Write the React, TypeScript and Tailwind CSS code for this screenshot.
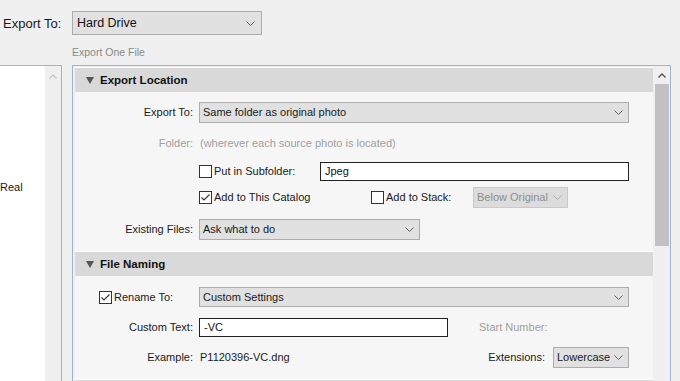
import React from "react";

function Chevron({ color = "#606060" }: { color?: string }) {
  return (
    <svg width="9" height="5" viewBox="0 0 9 5" className="shrink-0">
      <path d="M0.5 0.5 L4.5 4.5 L8.5 0.5" stroke={color} strokeWidth="1" fill="none" />
    </svg>
  );
}

function Dropdown({
  value,
  className = "",
  disabled = false
}: {
  value: string;
  className?: string;
  disabled?: boolean;
}) {
  return (
    <div
      className={`flex items-center justify-between border pl-[3px] pr-[5px] ${
        disabled
          ? "border-[#c9c9c9] bg-[#dcdcdc] text-[#8e8e8e]"
          : "border-[#adadad] bg-[#e1e1e1] text-[#1a1a1a]"
      } ${className}`}
    >
      <span className="whitespace-nowrap">{value}</span>
      <Chevron color={disabled ? "#b0b0b0" : "#606060"} />
    </div>
  );
}

function Checkbox({ checked = false }: { checked?: boolean }) {
  return (
    <span className="flex h-[13px] w-[13px] shrink-0 items-center justify-center border border-[#333] bg-white">
      {checked && (
        <svg width="11" height="11" viewBox="0 0 11 11">
          <path d="M1.5 5.5 L4 8 L9.5 2.5" stroke="#333" strokeWidth="1.1" fill="none" />
        </svg>
      )}
    </span>
  );
}

function CheckLabel({ label, checked = false, className = "" }: { label: string; checked?: boolean; className?: string }) {
  return (
    <div className={`flex items-center gap-[2px] ${className}`}>
      <Checkbox checked={checked} />
      <span className="whitespace-nowrap text-[#1a1a1a]">{label}</span>
    </div>
  );
}

function Label({ children, muted = false }: { children: React.ReactNode; muted?: boolean }) {
  return (
    <span className={`w-[118px] shrink-0 text-right ${muted ? "text-[#a0a0a0]" : "text-[#1a1a1a]"}`}>
      {children}
    </span>
  );
}

function SectionHeader({ title }: { title: string }) {
  return (
    <div className="flex h-[25px] items-center border-t border-white bg-[#d9d9d9] pl-[11px]">
      <svg width="8" height="7" viewBox="0 0 8 7" className="mr-[6px]">
        <polygon points="0,0 8,0 4,7" fill="#555" />
      </svg>
      <span className="text-[11.5px] font-bold text-[#111]">{title}</span>
    </div>
  );
}

export default function App() {
  return (
    <div className="h-[381px] w-[680px] overflow-hidden bg-[#f0f0f0] font-['Liberation_Sans',Arial,sans-serif] text-[11px] leading-[13px]">
      <div className="flex items-center pt-[11px]">
        <span className="w-[72px] pl-[3px] text-[13px] text-[#1a1a1a]">Export To:</span>
        <div className="flex h-[24px] w-[190px] items-center justify-between border border-[#adadad] bg-[#e1e1e1] pl-[4px] pr-[6px] text-[12.5px] text-[#111]">
          <span>Hard Drive</span>
          <Chevron />
        </div>
      </div>

      <div className="ml-[72px] mt-[11px] text-[10.5px] text-[#8a8a8a]">Export One File</div>

      <div className="mt-[6px] flex">
        <div className="flex h-[320px] w-[62px] border-r border-t border-[#9db4cb] bg-white">
          <div className="w-[45px] pt-[115px] text-[#1a1a1a]">Real</div>
          <div className="flex w-[16px] justify-center bg-[#efefef] pt-[8px]">
            <svg width="8" height="5" viewBox="0 0 8 5">
              <path d="M0.5 4.5 L4 1 L7.5 4.5" stroke="#c4c4c4" strokeWidth="1.3" fill="none" />
            </svg>
          </div>
        </div>

        <div className="ml-[10px] flex h-[320px] w-[599px] border-l border-r border-t border-[#9db4cb] pl-[2px] pt-[1px]">
          <div className="w-[578px]">
            <SectionHeader title="Export Location" />
            <div className="bg-[#f6f6f6] pb-[11px] pt-[10px]">
              <div className="flex h-[21px] items-center">
                <Label>Export To:</Label>
                <Dropdown value="Same folder as original photo" className="ml-[6px] h-[21px] w-[430px]" />
              </div>
              <div className="mt-[10px] flex h-[20px] items-center">
                <Label muted>Folder:</Label>
                <span className="ml-[7px] text-[#a0a0a0]">(wherever each source photo is located)</span>
              </div>
              <div className="mt-[9px] flex h-[19px] items-center">
                <span className="w-[124px] shrink-0" />
                <CheckLabel label="Put in Subfolder:" className="w-[121px]" />
                <div className="flex h-[19px] w-[309px] items-center border border-[#222] bg-white pl-[4px] text-[#111]">
                  Jpeg
                </div>
              </div>
              <div className="mt-[6px] flex h-[21px] items-center">
                <span className="w-[124px] shrink-0" />
                <CheckLabel label="Add to This Catalog" checked className="w-[172px]" />
                <CheckLabel label="Add to Stack:" className="w-[102px]" />
                <Dropdown value="Below Original" disabled className="h-[21px] w-[95px]" />
              </div>
              <div className="mt-[11px] flex h-[21px] items-center">
                <Label>Existing Files:</Label>
                <Dropdown value="Ask what to do" className="ml-[6px] h-[21px] w-[221px]" />
              </div>
            </div>

            <SectionHeader title="File Naming" />
            <div className="bg-[#f6f6f6] pb-[11px] pt-[11px]">
              <div className="flex h-[20px] items-center">
                <div className="w-[124px] shrink-0 pl-[24px]">
                  <CheckLabel label="Rename To:" checked />
                </div>
                <Dropdown value="Custom Settings" className="h-[20px] w-[430px]" />
              </div>
              <div className="mt-[11px] flex h-[19px] items-center">
                <Label>Custom Text:</Label>
                <div className="ml-[6px] flex h-[19px] w-[249px] items-center border border-[#222] bg-white pl-[4px] text-[#111]">
                  -VC
                </div>
                <span className="ml-[31px] text-[#a0a0a0]">Start Number:</span>
              </div>
              <div className="mt-[10px] flex h-[21px] items-center">
                <Label>Example:</Label>
                <span className="ml-[7px] text-[#1a1a1a]">P1120396-VC.dng</span>
                <span className="ml-auto mr-[8px] text-[#1a1a1a]">Extensions:</span>
                <Dropdown value="Lowercase" className="mr-[24px] h-[21px] w-[76px]" />
              </div>
            </div>
            <div className="h-[25px] border-t border-white bg-[#d9d9d9]" />
          </div>

          <div className="ml-[2px] w-[14px]">
            <div className="flex h-[17px] items-center justify-center">
              <svg width="8" height="5" viewBox="0 0 8 5">
                <path d="M0.5 4.5 L4 1 L7.5 4.5" stroke="#555" strokeWidth="1.4" fill="none" />
              </svg>
            </div>
            <div className="h-[162px] bg-[#c1c1c1]" />
          </div>
        </div>
      </div>
    </div>
  );
}
